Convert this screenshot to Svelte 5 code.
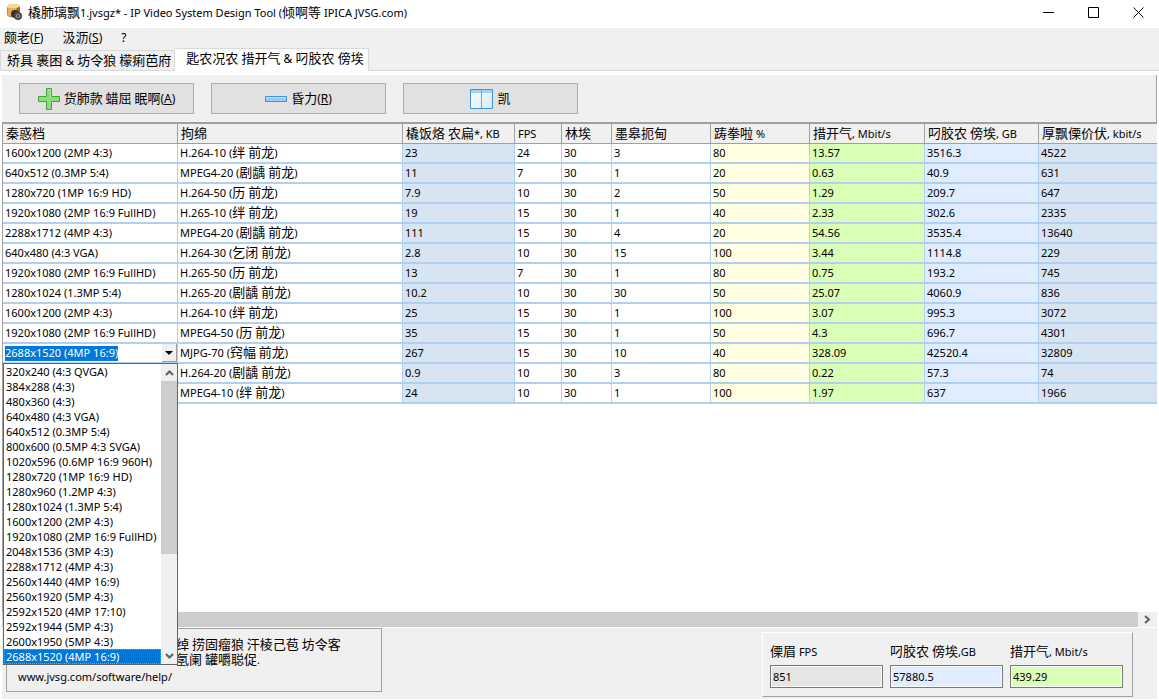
<script>
  const columns = [
    { label: '秦惑档', width: 175 },
    { label: '拘绵', width: 225 },
    { label: '橇饭烙 农扁*, KB', width: 112, tone: 'steel' },
    { label: 'FPS', width: 47 },
    { label: '林埃', width: 50 },
    { label: '墨皋扼甸', width: 99 },
    { label: '踌拳啦 %', width: 99, tone: 'cream' },
    { label: '措开气, Mbit/s', width: 115, tone: 'lime' },
    { label: '叼胶农 傍埃, GB', width: 114, tone: 'sky' },
    { label: '厚飘傈价伏, kbit/s', tone: 'steel' }
  ];

  const rows = [
    ['1600x1200 (2MP 4:3)', 'H.264-10 (绊 前龙)', '23', '24', '30', '3', '80', '13.57', '3516.3', '4522'],
    ['640x512 (0.3MP 5:4)', 'MPEG4-20 (剧龋 前龙)', '11', '7', '30', '1', '20', '0.63', '40.9', '631'],
    ['1280x720 (1MP 16:9 HD)', 'H.264-50 (历 前龙)', '7.9', '10', '30', '2', '50', '1.29', '209.7', '647'],
    ['1920x1080 (2MP 16:9 FullHD)', 'H.265-10 (绊 前龙)', '19', '15', '30', '1', '40', '2.33', '302.6', '2335'],
    ['2288x1712 (4MP 4:3)', 'MPEG4-20 (剧龋 前龙)', '111', '15', '30', '4', '20', '54.56', '3535.4', '13640'],
    ['640x480 (4:3 VGA)', 'H.264-30 (乞闭 前龙)', '2.8', '10', '30', '15', '100', '3.44', '1114.8', '229'],
    ['1920x1080 (2MP 16:9 FullHD)', 'H.265-50 (历 前龙)', '13', '7', '30', '1', '80', '0.75', '193.2', '745'],
    ['1280x1024 (1.3MP 5:4)', 'H.265-20 (剧龋 前龙)', '10.2', '10', '30', '30', '50', '25.07', '4060.9', '836'],
    ['1600x1200 (2MP 4:3)', 'H.264-10 (绊 前龙)', '25', '15', '30', '1', '100', '3.07', '995.3', '3072'],
    ['1920x1080 (2MP 16:9 FullHD)', 'MPEG4-50 (历 前龙)', '35', '15', '30', '1', '50', '4.3', '696.7', '4301'],
    ['2688x1520 (4MP 16:9)', 'MJPG-70 (窍幅 前龙)', '267', '15', '30', '10', '40', '328.09', '42520.4', '32809'],
    ['', 'H.264-20 (剧龋 前龙)', '0.9', '10', '30', '3', '80', '0.22', '57.3', '74'],
    ['', 'MPEG4-10 (绊 前龙)', '24', '10', '30', '1', '100', '1.97', '637', '1966']
  ];
  const editing = 10;

  const resolutions = [
    '320x240 (4:3 QVGA)', '384x288 (4:3)', '480x360 (4:3)', '640x480 (4:3 VGA)',
    '640x512 (0.3MP 5:4)', '800x600 (0.5MP 4:3 SVGA)', '1020x596 (0.6MP 16:9 960H)',
    '1280x720 (1MP 16:9 HD)', '1280x960 (1.2MP 4:3)', '1280x1024 (1.3MP 5:4)',
    '1600x1200 (2MP 4:3)', '1920x1080 (2MP 16:9 FullHD)', '2048x1536 (3MP 4:3)',
    '2288x1712 (4MP 4:3)', '2560x1440 (4MP 16:9)', '2560x1920 (5MP 4:3)',
    '2592x1520 (4MP 17:10)', '2592x1944 (5MP 4:3)', '2600x1950 (5MP 4:3)',
    '2688x1520 (4MP 16:9)'
  ];
  let resolution = $state('2688x1520 (4MP 16:9)');

  const totals = [
    { id: 'total-fps', label: '傈眉 FPS', value: '851', tone: 'grey' },
    { id: 'total-disk', label: '叼胶农 傍埃,GB', value: '57880.5', tone: 'sky' },
    { id: 'total-rate', label: '措开气, Mbit/s', value: '439.29', tone: 'lime' }
  ];

  // Splits a label into ideographic and Latin runs, which are set at different sizes.
  const runs = (text) => text.match(/[\u4e00-\u9fff]+|[^\u4e00-\u9fff]+/g) ?? [];
</script>

{#snippet mixed(text)}{#each runs(text) as run}{#if /[\u4e00-\u9fff]/.test(run)}<span class="han">{run}</span>{:else}{run}{/if}{/each}{/snippet}

<div class="window">
  <header class="titlebar">
    <svg class="logo" width="17" height="17" viewBox="0 0 17 17" aria-hidden="true">
      <path d="M1 3 4 0h8l2 3v7l-3 3H3L1 11z" fill="#c98d35" />
      <path d="M1 3 4 0h8l2 3-3 1H2z" fill="#f6d693" />
      <path d="M2 4h8v8H3L2 11z" fill="#e4ad56" />
      <path d="M11 4l3-1v6l-3 1z" fill="#9a682b" />
      <circle cx="9" cy="10" r="4" fill="#35312c" />
      <circle cx="12" cy="12" r="4" fill="#4b4b4b" />
      <circle cx="12" cy="12" r="2" fill="#aaa9a5" />
      <circle cx="12" cy="12" r="1" fill="#222" />
    </svg>
    <h1>{@render mixed('橇肺璃飘1.jvsgz* - IP Video System Design Tool (倾啊等 IPICA JVSG.com)')}</h1>
    <div class="caption">
      <button aria-label="Minimize"><svg width="11" height="11"><path d="M0 5.5h11" /></svg></button>
      <button aria-label="Maximize"><svg width="11" height="11"><path d="M.5.5h10v10H.5z" /></svg></button>
      <button aria-label="Close"><svg width="11" height="11"><path d="M.5.5l10 10M10.5.5l-10 10" /></svg></button>
    </div>
  </header>

  <nav class="menu">
    <button><span class="han">颇老</span>(<u>F</u>)</button>
    <button><span class="han">汲沥</span>(<u>S</u>)</button>
    <button>?</button>
  </nav>

  <div class="tabs" role="tablist">
    <button role="tab" aria-selected="false">{@render mixed('矫具 裹困 & 坊令狼 檬痢芭府')}</button>
    <button role="tab" aria-selected="true" class="active">{@render mixed('匙农况农 措开气 & 叼胶农 傍埃')}</button>
  </div>

  <main>
    <div class="toolbar">
      <button>
        <svg width="22" height="22" viewBox="0 0 22 22" aria-hidden="true">
          <path d="M8.5.5h5v8h8v5h-8v8h-5v-8h-8v-5h8z" fill="#8edb7c" stroke="#3fa535" />
          <path d="M9.5 1.5h3v8" fill="none" stroke="#b5ecaa" />
        </svg>
        <span><span class="han">货肺款 蜡屈 眠啊</span>(<u>A</u>)</span>
      </button>
      <button>
        <svg width="22" height="22" viewBox="0 0 22 22" aria-hidden="true">
          <path d="M.5 8.5h21v5H.5z" fill="#9dcbf5" stroke="#3d94e0" />
          <path d="M1 9.5h20" stroke="#c0dffa" />
        </svg>
        <span><span class="han">昏力</span>(<u>R</u>)</span>
      </button>
      <button>
        <svg width="23" height="20" viewBox="0 0 23 20" aria-hidden="true">
          <defs>
            <linearGradient id="pane" x2="1" y2="1">
              <stop offset="0" stop-color="#fff" />
              <stop offset="1" stop-color="#d5eafb" />
            </linearGradient>
          </defs>
          <path d="M.5.5h22v19H.5z" fill="url(#pane)" stroke="#3b94dc" />
          <path d="M1 1h21v3H1z" fill="#a5d3f5" />
          <path d="M11.5 1v18" stroke="#5fb1ee" />
        </svg>
        <span><span class="han">凯</span></span>
      </button>
    </div>

    <div class="grid">
      <table>
        <colgroup>
          {#each columns as column}
            <col style:width={column.width ? `${column.width}px` : 'auto'} />
          {/each}
        </colgroup>
        <thead>
          <tr>
            {#each columns as column}<th>{@render mixed(column.label)}</th>{/each}
          </tr>
        </thead>
        <tbody>
          {#each rows as row, r}
            <tr>
              {#each row as cell, c}
                {#if r === editing && c === 0}
                  <td class="editor">
                    <div class="combo">
                      <input aria-label="秦惑档" bind:value={resolution} size="20" />
                      <button aria-label="秦惑档"><svg width="8" height="4"><path d="M0 0h8L4 4z" /></svg></button>
                      <div class="popup">
                        <select size="20" aria-label="秦惑档" bind:value={resolution}>
                          {#each resolutions as option}<option value={option}>{option}</option>{/each}
                        </select>
                        <div class="scroll">
                          <button aria-label="Up"><svg width="9" height="6"><path d="M1 5l3.500-3.500L8 5" /></svg></button>
                          <div class="track"><div class="thumb"></div></div>
                          <button aria-label="Down"><svg width="9" height="6"><path d="M1 1l3.500 3.500L8 1" /></svg></button>
                        </div>
                      </div>
                    </div>
                  </td>
                {:else}
                  <td class={columns[c].tone}>{@render mixed(cell)}</td>
                {/if}
              {/each}
            </tr>
          {/each}
        </tbody>
      </table>
    </div>

    <div class="hscroll">
      <div class="thumb"></div>
      <button aria-label="Right"><svg width="7" height="9"><path d="M1 1l4 3.500L1 8" /></svg></button>
    </div>

    <footer>
      <section class="help">
        <p>{@render mixed('绰 捞固瘤狼 汗棱己苞 坊令客')}<br />{@render mixed('氢阑 罐嚼聪促.')}</p>
        <a href="http://www.jvsg.com/software/help/">www.jvsg.com/software/help/</a>
      </section>
      <section class="totals">
        {#each totals as total}
          <div>
            <label for={total.id}>{@render mixed(total.label)}</label>
            <input id={total.id} class={total.tone} value={total.value} readonly />
          </div>
        {/each}
      </section>
    </footer>
  </main>
</div>

<style>
  :global(body) {
    margin: 0;
    background: #f0f0f0;
  }
  .window {
    display: flex;
    flex-direction: column;
    min-height: 100vh;
    box-sizing: border-box;
    background: #f0f0f0;
    color: #000;
    font: 11px/16px "Noto Sans", "Noto Sans CJK SC", sans-serif;
    white-space: nowrap;
  }
  .han {
    font-family: "Noto Sans CJK SC", sans-serif;
    font-size: 13px;
    line-height: 1;
  }
  button, input, select {
    margin: 0;
    padding: 0;
    border: 0;
    border-radius: 0;
    background: none;
    color: inherit;
    font: inherit;
    outline: 0;
  }
  .titlebar {
    display: flex;
    align-items: center;
    height: 28px;
    padding-left: 6px;
    background: #fff;
  }
  h1 {
    flex: 1;
    margin: 0 0 3px 5px;
    font-size: 11px;
    font-weight: 400;
  }
  .logo {
    margin-bottom: 4px;
  }
  .caption {
    display: flex;
    margin-bottom: 3px;
  }
  .caption button {
    display: grid;
    place-items: center;
    box-sizing: border-box;
    width: 45px;
    height: 25px;
    padding-left: 4px;
  }
  .caption path {
    fill: none;
    stroke: #000;
  }
  .menu {
    display: flex;
    gap: 19px;
    height: 20px;
    padding-left: 4px;
    font-size: 12px;
  }
  .tabs {
    display: flex;
    align-items: flex-end;
    height: 22px;
    border-bottom: 1px solid #d9d9d9;
    font-size: 12px;
  }
  .tabs button {
    height: 20px;
    padding: 0 3px 0 6px;
    border: 1px solid #d9d9d9;
    border-width: 1px 1px 0;
  }
  .tabs .active {
    height: 23px;
    margin-bottom: -1px;
    padding: 0 4px 3px 11px;
    border-left: 0;
    background: #fff;
  }
  main {
    display: flex;
    flex: 1;
    flex-direction: column;
    border: 1px solid #fff;
    border-width: 4px 2px 1px;
  }
  .toolbar {
    display: flex;
    gap: 17px;
    padding: 8px 17px 8px;
    border-right: 1px solid #a0a0a0;
    font-size: 12px;
  }
  .toolbar button {
    display: flex;
    align-items: center;
    justify-content: center;
    gap: 4px;
    box-sizing: border-box;
    width: 175px;
    height: 31px;
    border: 1px solid #adadad;
    background: #e1e1e1;
  }
  .grid {
    flex: 1;
    border-top: 2px solid #a0a0a0;
    border-left: 1px solid #a0a0a0;
    background: #fff;
  }
  table {
    width: 100%;
    table-layout: fixed;
    border-collapse: separate;
    border-spacing: 0;
  }
  th, td {
    box-sizing: border-box;
    height: 20px;
    padding: 0 2px;
    font-weight: 400;
    line-height: 18px;
    text-align: left;
    border-right: 1px solid #b1cff0;
  }
  th {
    padding-left: 3px;
    border-right: 1px solid #a0a0a0;
    border-bottom: 1px solid #a0a0a0;
    background: #f0f0f0;
  }
  td {
    border-bottom: 2px solid #b1cff0;
  }
  th:last-child, td:last-child {
    border-right: 0;
  }
  .steel { background: #d7e4f2; }
  .cream { background: #ffffe1; }
  .lime { background: #dbffb7; }
  .sky { background: #e0edff; }
  .grey { background: #e5e5e5; }
  .editor {
    padding: 0;
  }
  .combo {
    position: relative;
    display: flex;
    align-items: center;
    justify-content: space-between;
    height: 18px;
    padding-left: 2px;
  }
  .combo input {
    field-sizing: content;
    height: 15px;
    background: #0078d7;
    color: #fff;
  }
  .combo > button {
    display: grid;
    place-items: center;
    box-sizing: border-box;
    width: 15px;
    height: 18px;
    border: 1px solid #a0a0a0;
    border-width: 0 1px 1px 0;
    background: #f0f0f0;
  }
  .popup {
    position: absolute;
    z-index: 2;
    top: 19px;
    left: 0;
    display: flex;
    box-sizing: border-box;
    width: 175px;
    height: 302px;
    border: 1px solid #646464;
    background: #fff;
  }
  select {
    flex: 1;
    overflow: hidden;
    height: 300px;
  }
  option {
    height: 15px;
    min-height: 15px;
    box-sizing: border-box;
    padding: 0 2px;
    line-height: 15px;
  }
  option:checked {
    background: #0078d7 linear-gradient(#0078d7, #0078d7);
    color: #fff;
    -webkit-text-fill-color: #fff;
    outline: 1px dotted #e08a30;
    outline-offset: -1px;
  }
  .scroll {
    display: flex;
    flex-direction: column;
    width: 16px;
    background: #f0f0f0;
  }
  .scroll button {
    display: grid;
    place-items: center;
    height: 17px;
  }
  .scroll path, .hscroll path {
    fill: none;
    stroke: #606060;
    stroke-width: 2;
  }
  .track {
    flex: 1;
  }
  .thumb {
    background: #cdcdcd;
  }
  .track .thumb {
    height: 65%;
  }
  .hscroll {
    display: flex;
    height: 15px;
  }
  .hscroll .thumb {
    flex: 1;
  }
  .hscroll button {
    display: grid;
    place-items: center;
    width: 19px;
  }
  footer {
    display: flex;
    align-items: flex-start;
    justify-content: space-between;
    padding: 0 24px 2px 4px;
    border-top: 1px solid #fff;
  }
  .help {
    box-sizing: border-box;
    width: 376px;
    height: 64px;
    padding: 8px 11px;
    border: 1px solid #a0a0a0;
  }
  .help p {
    margin: 0 0 0 158px;
    line-height: 15px;
  }
  .help a {
    display: block;
    margin-top: 2px;
    color: inherit;
    text-decoration: none;
  }
  .totals {
    display: flex;
    gap: 7px;
    margin-top: 4px;
    padding: 10px 9px 8px 7px;
    border: 1px solid;
    border-color: #fff #a0a0a0 #a0a0a0 #fff;
  }
  .totals label {
    display: block;
    height: 22px;
    line-height: 18px;
  }
  .totals input {
    display: block;
    box-sizing: border-box;
    width: 113px;
    height: 23px;
    padding: 0 2px;
    border: 1px solid #7a7a7a;
    box-shadow: inset 0 0 0 1px #fff;
  }
</style>
